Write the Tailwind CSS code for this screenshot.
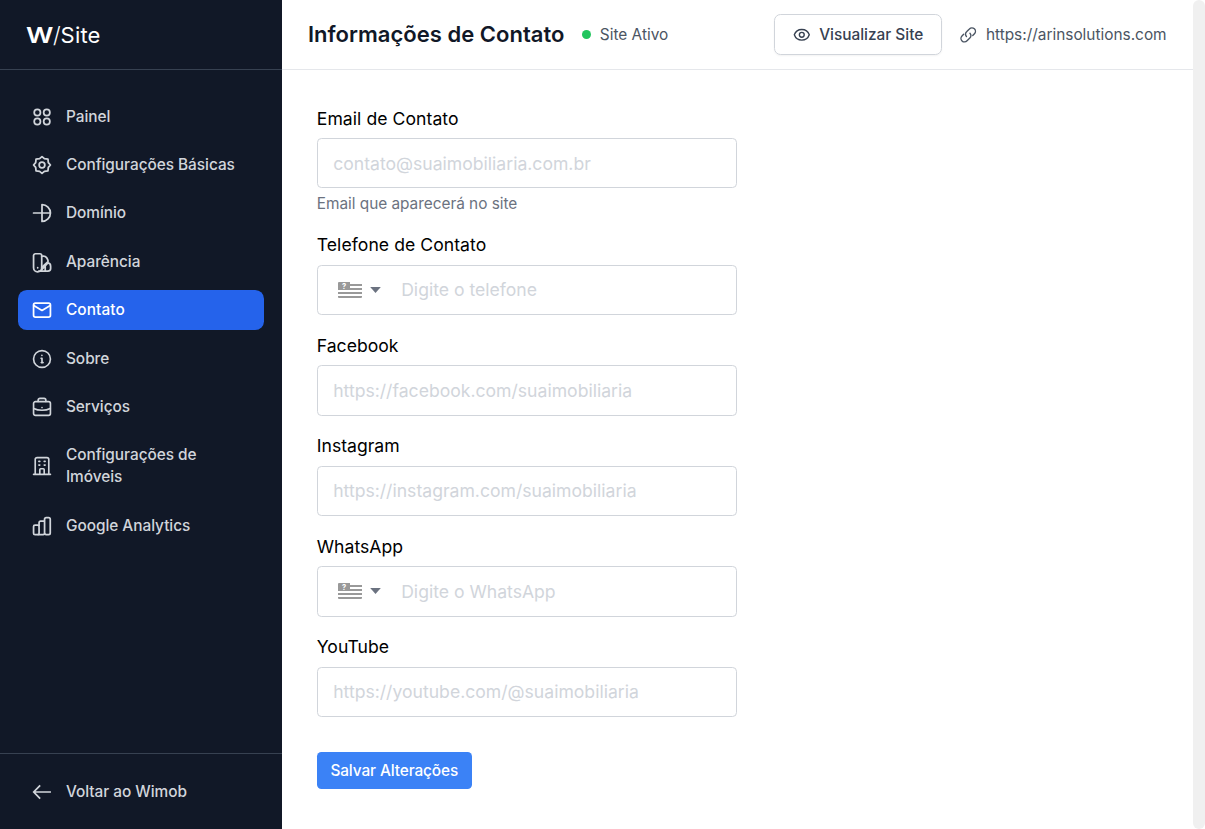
<!DOCTYPE html>
<html lang="pt-BR" class="text-[17.6px]">
<head>
  <meta charset="UTF-8" />
  <meta name="viewport" content="width=device-width, initial-scale=1.0"/>
  <title>Informações de Contato</title>
  <script src="https://cdn.jsdelivr.net/npm/@tailwindcss/browser@4"></script>
</head>
<body class="flex h-screen overflow-hidden bg-white font-[Inter,sans-serif] text-base text-black">

  <!-- Sidebar -->
  <aside class="flex w-64 shrink-0 flex-col bg-[#111827] text-sm font-medium tracking-[-0.04px] text-[#d1d5db]">
    <div class="flex h-16 items-center border-b border-[#374151] px-6 tracking-normal text-white">
      <span class="inline-block w-[26.5px] origin-left scale-x-[1.22] text-[22px] leading-none font-semibold">W</span>
      <span class="text-[22px] leading-none font-light">/</span>
      <span class="text-[22px] leading-none font-normal tracking-[0.2px]">Site</span>
    </div>

    <nav class="mt-6 flex flex-1 flex-col gap-2 px-4">
      <a href="#" class="flex items-center gap-3 rounded-lg px-3 py-2">
        <svg class="size-5 shrink-0" viewBox="0 0 24 24" fill="none" stroke="currentColor" stroke-width="1.9">
          <circle cx="6.9" cy="7" r="3.4"/><circle cx="17.2" cy="7" r="3.4"/><circle cx="6.9" cy="17" r="3.4"/><circle cx="17.2" cy="17" r="3.4"/>
        </svg>
        <span>Painel</span>
      </a>
      <a href="#" class="flex items-center gap-3 rounded-lg px-3 py-2">
        <svg class="size-5 shrink-0" viewBox="0 0 24 24" fill="none" stroke="currentColor" stroke-width="1.9" stroke-linejoin="round">
          <path d="M12 2.8 14.6 5.1 18.5 5.5 18.9 9.4 21.2 12 18.9 14.6 18.5 18.5 14.6 18.9 12 21.2 9.4 18.9 5.5 18.5 5.1 14.6 2.8 12 5.1 9.4 5.5 5.5 9.4 5.1Z"/>
          <circle cx="12" cy="12" r="3.1"/>
        </svg>
        <span>Configurações Básicas</span>
      </a>
      <a href="#" class="flex items-center gap-3 rounded-lg px-3 py-2">
        <svg class="size-5 shrink-0" viewBox="0 0 24 24" fill="none" stroke="currentColor" stroke-width="1.9" stroke-linecap="round" stroke-linejoin="round">
          <path d="M12 2.8c5.1 0 9.2 4.1 9.2 9.2s-4.1 9.2-9.2 9.2ZM21.2 12H2.8"/>
        </svg>
        <span>Domínio</span>
      </a>
      <a href="#" class="flex items-center gap-3 rounded-lg px-3 py-2">
        <svg class="size-5 shrink-0 overflow-visible" viewBox="0 0 24 24" fill="none" stroke="currentColor" stroke-width="1.9" stroke-linecap="round" stroke-linejoin="round">
          <path d="M4.8 3h4.9a2 2 0 0 1 2 2v13.3a4.4 4.4 0 0 1-8.9 0V5a2 2 0 0 1 2-2Z"/>
          <path d="m11.7 6 1.5-.5c1.8-.2 3 .6 4 2l1.2 2.3c.5.9.2 2-.7 2.7l-6 5.5M10.5 21.8l7.9-8.8c2.2.3 3 1.6 3 3.5v2.6c0 1.7-1.2 2.8-3 2.8H8.5M7.3 18.2v.1M15.5 16.5v5"/>
        </svg>
        <span>Aparência</span>
      </a>
      <a href="#" class="flex items-center gap-3 rounded-lg bg-[#2563eb] px-3 py-2 tracking-[0.08px] text-white">
        <svg class="size-5 shrink-0" viewBox="0 0 24 24" fill="none" stroke="currentColor" stroke-width="1.9" stroke-linecap="round" stroke-linejoin="round">
          <rect x="2.8" y="4.5" width="18.4" height="15.2" rx="2"/>
          <path d="m3 7 9 5.5 9-5.5"/>
        </svg>
        <span>Contato</span>
      </a>
      <a href="#" class="flex items-center gap-3 rounded-lg px-3 py-2">
        <svg class="size-5 shrink-0" viewBox="0 0 24 24" fill="none" stroke="currentColor" stroke-width="1.8" stroke-linecap="round" stroke-linejoin="round">
          <circle cx="12" cy="12" r="9.2"/>
          <path d="M11 11.3h1v4.6M11.2 15.9h2M11.9 7.9v.3"/>
        </svg>
        <span>Sobre</span>
      </a>
      <a href="#" class="flex items-center gap-3 rounded-lg px-3 py-2">
        <svg class="size-5 shrink-0" viewBox="0 0 24 24" fill="none" stroke="currentColor" stroke-width="1.8" stroke-linecap="round" stroke-linejoin="round">
          <rect x="2.8" y="6.2" width="18.4" height="15" rx="2"/>
          <path d="M7.8 6V4.6a2 2 0 0 1 2-2h4.4a2 2 0 0 1 2 2V6M3 13.6c5 2.6 13 2.6 18 0"/>
          <path d="M12 12.5v.1"/>
        </svg>
        <span>Serviços</span>
      </a>
      <a href="#" class="flex items-center gap-3 rounded-lg px-3 py-2">
        <svg class="size-5 shrink-0" viewBox="0 0 24 24" fill="none" stroke="currentColor" stroke-width="1.8" stroke-linecap="round" stroke-linejoin="round">
          <path d="M2.8 21.2h18.4M4.6 21.2V4.8a2 2 0 0 1 2-2h10.8a2 2 0 0 1 2 2v16.4M9.6 21V16a1 1 0 0 1 1-1h2.8a1 1 0 0 1 1 1v5"/>
          <path d="M8.6 7h1M14.4 7h1M8.6 11h1M14.4 11h1"/>
        </svg>
        <span>Configurações de Imóveis</span>
      </a>
      <a href="#" class="flex items-center gap-3 rounded-lg px-3 py-2">
        <svg class="size-5 shrink-0" viewBox="0 0 24 24" fill="none" stroke="currentColor" stroke-width="1.9">
          <rect x="2.8" y="11" width="6" height="10.4" rx="1.6"/>
          <path d="M8.8 12V8.4a1.6 1.6 0 0 1 1.6-1.6h4.4M14.8 20a1.4 1.4 0 0 1-1.4 1.4H7.2"/>
          <rect x="14.8" y="2.8" width="6.2" height="18.6" rx="1.8"/>
        </svg>
        <span>Google Analytics</span>
      </a>
    </nav>

    <div class="border-t border-[#374151] p-4">
      <a href="#" class="flex items-center gap-3 px-3 py-2">
        <svg class="size-5 shrink-0" viewBox="0 0 24 24" fill="none" stroke="currentColor" stroke-width="1.9">
          <path d="M21.8 12H3.2M10 4.8 3 12l7 7.2"/>
        </svg>
        <span>Voltar ao Wimob</span>
      </a>
    </div>
  </aside>

  <main class="flex min-w-0 flex-1 flex-col">
    <!-- Header -->
    <header class="flex h-16 shrink-0 items-center justify-between border-b border-[#e5e7eb] px-6">
      <div class="flex items-center">
        <h1 class="text-xl font-semibold tracking-[0.02px] text-[#111827]">Informações de Contato</h1>
        <span class="mr-2 ml-4 size-[9px] rounded-full bg-[#22c55e]"></span>
        <span class="text-sm text-[#4b5563]">Site Ativo</span>
      </div>
      <div class="flex items-center gap-4 text-sm">
        <button class="flex items-center gap-2 rounded-md border border-[#d1d5db] px-4 py-2 font-medium text-[#374151] shadow-xs">
          <svg class="size-4" viewBox="0 0 24 24" fill="none" stroke="currentColor" stroke-width="1.9">
            <path d="M1.8 12C3.4 7.4 7.2 4.7 12 4.7s8.6 2.7 10.2 7.3c-1.6 4.6-5.4 7.3-10.2 7.3S3.4 16.6 1.8 12Z"/>
            <circle cx="12" cy="12" r="3.3"/>
          </svg>
          <span>Visualizar Site</span>
        </button>
        <a href="#" class="flex items-center gap-2 text-[#4b5563]">
          <svg class="size-4" viewBox="0 0 24 24" fill="none" stroke="currentColor" stroke-width="1.9" stroke-linecap="round">
            <path d="M8.8 14.4a4.7 4.7 0 0 1 .2-6.7l3.8-3.7a4.7 4.7 0 0 1 6.9 6.7l-2.3 2.3"/>
            <path d="M13.6 9.8a4.7 4.7 0 0 1-.2 6.7l-3.8 3.7a4.7 4.7 0 0 1-6.9-6.7l2.3-2.3"/>
          </svg>
          <span>https://arinsolutions.com</span>
        </a>
      </div>
    </header>

    <!-- Formulário -->
    <form class="flex w-[491px] flex-col items-stretch gap-[17.8px] p-8">
      <div>
        <label class="mb-[6px] block tracking-[0.05px]">Email de Contato</label>
        <input type="text" placeholder="contato@suaimobiliaria.com.br" class="block h-[50.3px] w-full rounded border border-[#d1d5db] px-[15.4px] placeholder:text-[#d1d5db]">
        <p class="mt-1 text-sm tracking-[-0.03px] text-[#6b7280]">Email que aparecerá no site</p>
      </div>
      <div>
        <label class="mb-[6px] block tracking-[0.05px]">Telefone de Contato</label>
        <div class="flex h-[50.3px] items-center rounded border border-[#d1d5db] pl-[20px]">
          <svg class="h-[16px] w-[24px] shrink-0 overflow-visible" viewBox="0 0 24 16" fill="#999">
            <path d="M1 0h11v8H0V1a1 1 0 0 1 1-1ZM12 2h12v2H12zM12 6h12v2H12zM0 10h24v2H0zM0 14h24v1a1 1 0 0 1-1 1H1a1 1 0 0 1-1-1z"/>
            <text x="6" y="6.7" text-anchor="middle" font-family="Inter" font-size="7.5" font-weight="700" fill="#fff">?</text>
          </svg>
          <svg class="ml-[8px] h-[6px] w-[11px]" viewBox="0 0 11 6" fill="#6b7280"><path d="M.2 0h10.6L5.5 6z"/></svg>
          <input type="text" placeholder="Digite o telefone" class="ml-[20.4px] min-w-0 flex-1 placeholder:text-[#d1d5db]">
        </div>
      </div>
      <div>
        <label class="mb-[6px] block">Facebook</label>
        <input type="text" placeholder="https://facebook.com/suaimobiliaria" class="block h-[50.3px] w-full rounded border border-[#d1d5db] px-[15.4px] placeholder:text-[#d1d5db]">
      </div>
      <div>
        <label class="mb-[6px] block">Instagram</label>
        <input type="text" placeholder="https://instagram.com/suaimobiliaria" class="block h-[50.3px] w-full rounded border border-[#d1d5db] px-[15.4px] placeholder:text-[#d1d5db]">
      </div>
      <div>
        <label class="mb-[6px] block">WhatsApp</label>
        <div class="flex h-[50.3px] items-center rounded border border-[#d1d5db] pl-[20px]">
          <svg class="h-[16px] w-[24px] shrink-0 overflow-visible" viewBox="0 0 24 16" fill="#999">
            <path d="M1 0h11v8H0V1a1 1 0 0 1 1-1ZM12 2h12v2H12zM12 6h12v2H12zM0 10h24v2H0zM0 14h24v1a1 1 0 0 1-1 1H1a1 1 0 0 1-1-1z"/>
            <text x="6" y="6.7" text-anchor="middle" font-family="Inter" font-size="7.5" font-weight="700" fill="#fff">?</text>
          </svg>
          <svg class="ml-[8px] h-[6px] w-[11px]" viewBox="0 0 11 6" fill="#6b7280"><path d="M.2 0h10.6L5.5 6z"/></svg>
          <input type="text" placeholder="Digite o WhatsApp" class="mt-px ml-[20.4px] min-w-0 flex-1 placeholder:text-[#d1d5db]">
        </div>
      </div>
      <div>
        <label class="mb-[6px] block">YouTube</label>
        <input type="text" placeholder="https://youtube.com/@suaimobiliaria" class="block h-[50.3px] w-full rounded border border-[#d1d5db] px-[15.4px] placeholder:text-[#d1d5db]">
      </div>
      <button type="button" class="mt-[17px] h-[37px] w-[155px] rounded bg-[#3b82f6] pt-px text-sm font-medium tracking-[-0.1px] text-white">Salvar Alterações</button>
    </form>
  </main>

  <!-- Barra de rolagem -->
  <div class="w-[12px] shrink-0 rounded-full bg-[#f0f0f0]"></div>

</body>
</html>
